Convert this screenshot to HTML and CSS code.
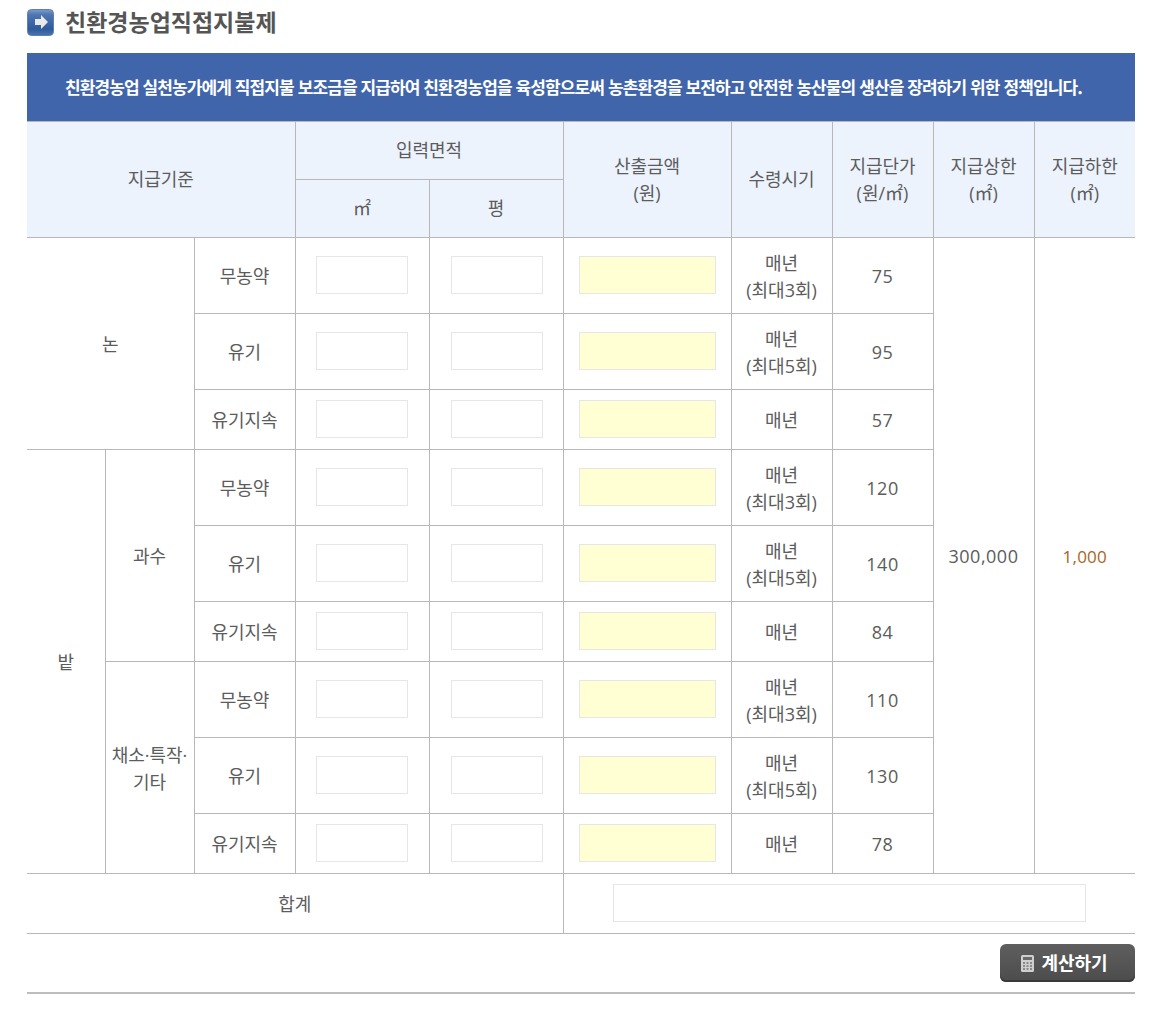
FILE: index.html
```html
<!DOCTYPE html>
<html lang="ko">
<head>
<meta charset="utf-8">
<title>친환경농업직접지불제</title>
<link rel="stylesheet" href="styles.css">
</head>
<body>
<main class="page">
  <h1 class="title">
    <svg class="title-icon" width="27" height="27" viewBox="0 0 27 27">
      <defs><linearGradient id="ti" x1="0" y1="0" x2="0" y2="1"><stop offset="0" stop-color="#7d9ccb"/><stop offset=".2" stop-color="#4f76b2"/><stop offset=".75" stop-color="#2f5a9c"/><stop offset="1" stop-color="#4a74b0"/></linearGradient></defs>
      <rect x=".5" y=".5" width="26" height="26" rx="4" fill="url(#ti)" stroke="#5d7fb4"/>
      <path d="M8 10h6V6l7 7-7 7v-4H8z" fill="#e9e9e9"/>
    </svg>
    <span class="title-text">친환경농업직접지불제</span>
  </h1>
  <p class="banner">친환경농업 실천농가에게 직접지불 보조금을 지급하여 친환경농업을 육성함으로써 농촌환경을 보전하고 안전한 농산물의 생산을 장려하기 위한 정책입니다.</p>
  <table class="grid">
    <colgroup>
      <col class="c1"><col class="c2"><col class="c3"><col class="c4"><col class="c4"><col class="c5"><col class="c6"><col class="c6"><col class="c6"><col class="c6">
    </colgroup>
    <thead>
      <tr class="h1">
        <th colspan="3" rowspan="2">지급기준</th>
        <th colspan="2">입력면적</th>
        <th rowspan="2">산출금액<br>(원)</th>
        <th rowspan="2">수령시기</th>
        <th rowspan="2">지급단가<br>(원/㎡)</th>
        <th rowspan="2">지급상한<br>(㎡)</th>
        <th rowspan="2">지급하한<br>(㎡)</th>
      </tr>
      <tr class="h2"><th>㎡</th><th>평</th></tr>
    </thead>
    <tbody>
      <tr class="tall">
        <td colspan="2" rowspan="3">논</td><td>무농약</td>
        <td><input class="in"></td><td><input class="in in2"></td><td><input class="out"></td>
        <td>매년<br>(최대3회)</td><td class="num">75</td>
        <td rowspan="9" class="num">300,000</td><td rowspan="9" class="low">1,000</td>
      </tr>
      <tr class="tall"><td>유기</td><td><input class="in"></td><td><input class="in in2"></td><td><input class="out"></td><td>매년<br>(최대5회)</td><td class="num">95</td></tr>
      <tr class="short"><td>유기지속</td><td><input class="in"></td><td><input class="in in2"></td><td><input class="out"></td><td>매년</td><td class="num">57</td></tr>
      <tr class="tall"><td rowspan="6">밭</td><td rowspan="3">과수</td><td>무농약</td><td><input class="in"></td><td><input class="in in2"></td><td><input class="out"></td><td>매년<br>(최대3회)</td><td class="num">120</td></tr>
      <tr class="tall"><td>유기</td><td><input class="in"></td><td><input class="in in2"></td><td><input class="out"></td><td>매년<br>(최대5회)</td><td class="num">140</td></tr>
      <tr class="short"><td>유기지속</td><td><input class="in"></td><td><input class="in in2"></td><td><input class="out"></td><td>매년</td><td class="num">84</td></tr>
      <tr class="tall"><td rowspan="3">채소·특작·<br>기타</td><td>무농약</td><td><input class="in"></td><td><input class="in in2"></td><td><input class="out"></td><td>매년<br>(최대3회)</td><td class="num">110</td></tr>
      <tr class="tall"><td>유기</td><td><input class="in"></td><td><input class="in in2"></td><td><input class="out"></td><td>매년<br>(최대5회)</td><td class="num">130</td></tr>
      <tr class="short"><td>유기지속</td><td><input class="in"></td><td><input class="in in2"></td><td><input class="out"></td><td>매년</td><td class="num">78</td></tr>
      <tr class="short"><td colspan="5">합계</td><td colspan="5"><input class="total"></td></tr>
    </tbody>
  </table>
  <div class="actions">
    <button class="calc" type="button">
      <svg width="13" height="17" viewBox="0 0 13 17">
        <rect width="13" height="17" rx="1.5" fill="#cfcfcf"/>
        <rect x="2" y="2" width="9" height="3" fill="#6a6a6a"/>
        <path d="M2 7h2v2H2zM5.500 7h2v2h-2zM9 7h2v2H9zM2 10h2v2H2zM5.500 10h2v2h-2zM9 10h2v2H9zM2 13h2v2H2zM5.500 13h2v2h-2zM9 13h2v2H9z" fill="#8a8a8a"/>
      </svg>
      <span class="calc-text">계산하기</span>
    </button>
  </div>
</main>
</body>
</html>
```
FILE: styles.css
```css
* { box-sizing: border-box; }
html, body { margin: 0; background: #fff; }
body {
  font-family: "Noto Sans CJK KR", "Noto Sans", sans-serif;
  color: #555;
}
.page { width: 1108px; margin-left: 27px; padding-top: 9px; height: 1018px; }
.title {
  display: flex; align-items: center; gap: 11px;
  height: 27px; margin: 0 0 17px;
  font-size: 23px; font-weight: 700; letter-spacing: 0; color: #555;
}
.title-text { padding-bottom: 3px; }
.title-icon { display: block; flex: none; }
.banner {
  margin: 0; height: 68px; padding: 0 0 2px 38px;
  display: flex; align-items: center;
  background: #4065aa; color: #fff;
  font-size: 17px; font-weight: 700; letter-spacing: -0.9px;
}
.grid {
  width: 1108px; table-layout: fixed; border-collapse: collapse;
  font-size: 18px; line-height: 27px; text-align: center;
  font-family: "Open Sans", "Noto Sans CJK KR", sans-serif;
  color: #5c5c5c;
}
.c1 { width: 78px; } .c2 { width: 89px; } .c3 { width: 101px; }
.c4 { width: 134px; } .c5 { width: 168px; } .c6 { width: 101px; }
.grid th, .grid td {
  padding: 0; border: 1px solid #b8b8b8; font-weight: 400; vertical-align: middle;
}
.grid td { padding-top: 2px; }
.grid tr > :first-child { border-left: 0; }
.grid tr > :last-child { border-right: 0; }
.grid th { background: #ecf3fd; }
.h1 { height: 58px; } .h2 { height: 58px; }
.tall { height: 76px; } .short { height: 60px; }
.grid .num { letter-spacing: 0.5px; }
.grid .low { color: #a8651f; font-size: 17px; font-weight: 500; letter-spacing: 0.2px; }
input {
  display: block; margin: 0 auto 4px; height: 38px; padding: 0;
  border: 1px solid #e6e6e6; background: #fff; outline: 0;
}
.in { width: 92px; }
.in2 { margin-left: 21px; }
.out { width: 137px; background: #ffffd3; }
.total { width: 473px; }
.actions { display: flex; justify-content: flex-end; padding: 10px 0; border-bottom: 2px solid #bdbdbd; }
.calc {
  width: 135px; height: 38px; padding: 0 6px 0 0; border: 0; border-radius: 6px;
  display: flex; align-items: center; justify-content: center; gap: 7px;
  background: linear-gradient(#5f5f5f, #4c4c4c); color: #fff;
  box-shadow: inset 0 -2px 0 #3a3a3a;
  font: 700 18px "Noto Sans CJK KR", sans-serif;
}
.calc-text { padding-bottom: 2px; }
.calc svg { display: block; }
```
